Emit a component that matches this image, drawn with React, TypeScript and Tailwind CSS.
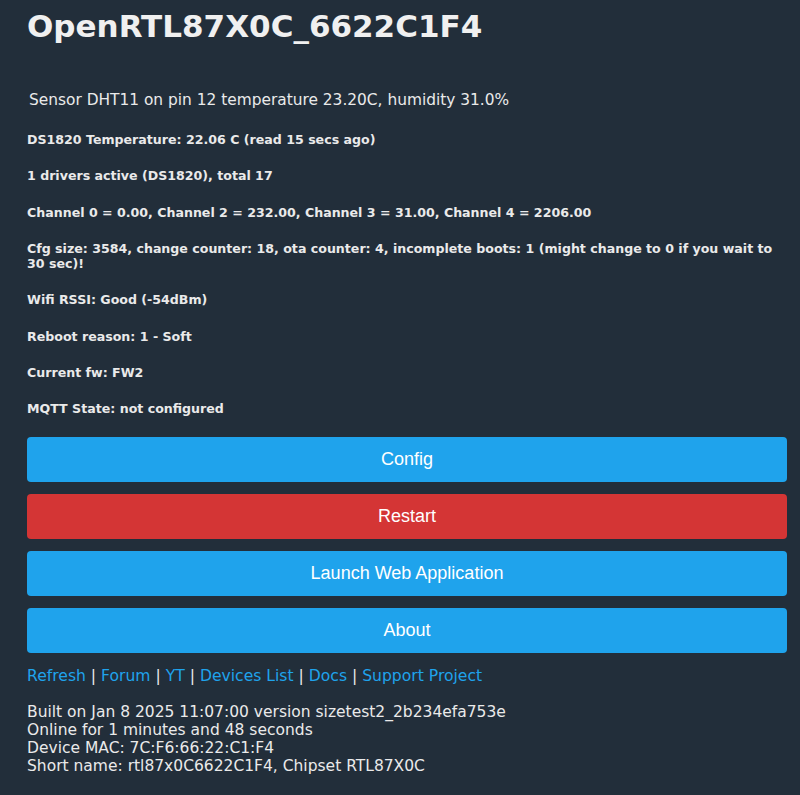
import React from "react";

export default function App() {
  const lines = [
    "DS1820 Temperature: 22.06 C (read 15 secs ago)",
    "1 drivers active (DS1820), total 17",
    "Channel 0 = 0.00, Channel 2 = 232.00, Channel 3 = 31.00, Channel 4 = 2206.00",
    "Cfg size: 3584, change counter: 18, ota counter: 4, incomplete boots: 1 (might change to 0 if you wait to 30 sec)!",
    "Wifi RSSI: Good (-54dBm)",
    "Reboot reason: 1 - Soft",
    "Current fw: FW2",
    "MQTT State: not configured",
  ];
  const links = ["Refresh", "Forum", "YT", "Devices List", "Docs", "Support Project"];
  return (
    <div className="min-h-[795px] w-[800px] bg-[#222e3a] text-[#eaeaea] [font-family:'DejaVu_Sans',Verdana,sans-serif]">
      <div className="w-[760px] pl-[27px] box-content pt-[7px]">
        <h1 className="text-[31px] font-bold leading-[38px] text-[#f0f0f0]">OpenRTL87X0C_6622C1F4</h1>
        <div className="mt-[45px] pl-[2px] text-[15.4px] leading-[20px]">
          Sensor DHT11 on pin 12 temperature 23.20C, humidity 31.0%
        </div>
        <div className="mt-[22px] flex flex-col gap-[21px]">
          {lines.map((l) => (
            <div key={l} className="text-[12.6px] font-bold leading-[15.3px]">
              {l}
            </div>
          ))}
        </div>
        <div className="mt-[20px] flex flex-col gap-[12px] [font-family:'Liberation_Sans',Arial,sans-serif]">
          <button className="h-[45px] w-full rounded-[4px] bg-[#1fa3ec] text-[18px] text-white">Config</button>
          <button className="h-[45px] w-full rounded-[4px] bg-[#d43535] text-[18px] text-white">Restart</button>
          <button className="h-[45px] w-full rounded-[4px] bg-[#1fa3ec] text-[18px] text-white">Launch Web Application</button>
          <button className="h-[45px] w-full rounded-[4px] bg-[#1fa3ec] text-[18px] text-white">About</button>
        </div>
        <div className="mt-[13px] text-[15.6px] leading-[20px]">
          {links.map((l, i) => (
            <span key={l}>
              {i > 0 && <span> | </span>}
              <a className="text-[#1fa3ec]">{l}</a>
            </span>
          ))}
        </div>
        <div className="mt-[17px] text-[15.5px] leading-[18px]">
          <div>Built on Jan 8 2025 11:07:00 version sizetest2_2b234efa753e</div>
          <div>Online for 1 minutes and 48 seconds</div>
          <div>Device MAC: 7C:F6:66:22:C1:F4</div>
          <div>Short name: rtl87x0C6622C1F4, Chipset RTL87X0C</div>
        </div>
      </div>
    </div>
  );
}
